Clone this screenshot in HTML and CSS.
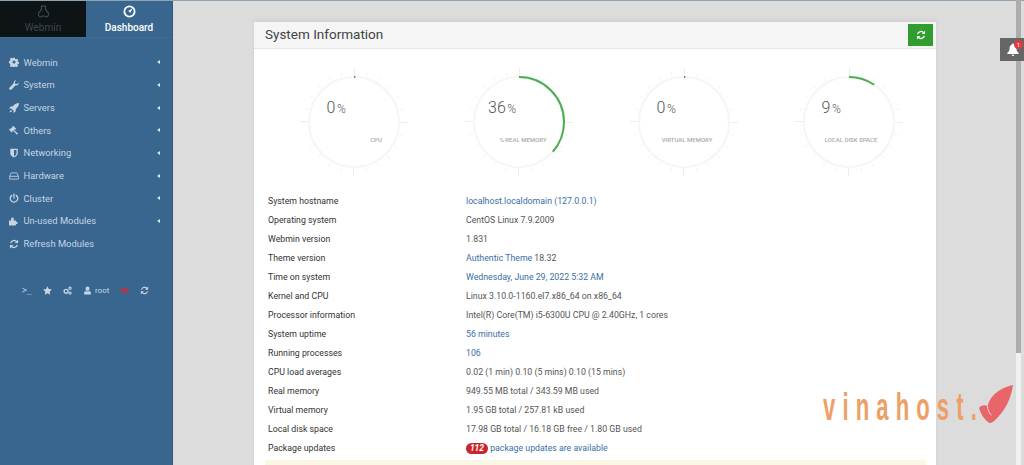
FILE: index.html
```html
<!DOCTYPE html>
<html lang="en">
<head>
<meta charset="utf-8">
<title>System Information</title>
<link rel="stylesheet" href="styles.css">
</head>
<body>
<svg class="sprite" width="0" height="0" aria-hidden="true">
  <defs>
    <symbol id="i-gear" viewBox="0 0 16 16"><path fill="currentColor" fill-rule="evenodd" d="M6.600 1h2.800l.4 2 1.200.6 1.800-1 1.900 2-1 1.700.5 1.300 1.800.5v2.700l-1.900.5-.5 1.200 1 1.800-2 1.900-1.700-1-1.200.5-.5 1.800H6.600l-.5-1.900-1.200-.5-1.700 1-2-1.900 1-1.700-.5-1.300L0 9.300V6.600l1.800-.5.500-1.300-1-1.700 2-2 1.700 1 1.200-.5zM8 5.500a2.500 2.500 0 1 0 0 5 2.500 2.500 0 0 0 0-5z"/></symbol>
    <symbol id="i-wrench" viewBox="0 0 16 16"><path fill="currentColor" d="M15.500 4.200c.3 2.600-2.200 5-4.800 4.300L4.100 15.100c-.9.900-2.300.9-3.200 0s-.9-2.300 0-3.200l6.600-6.600C6.800 2.700 9.200.2 11.800.5L9.300 3l.5 2.900 2.900.5z"/></symbol>
    <symbol id="i-rocket" viewBox="0 0 16 16"><path fill="currentColor" d="M16 0c-4.500.2-7.400 2-9.500 5L2.500 5.500 0 9l3.500-.3L7.300 12.500 7 16l3.500-2.500.5-4C14 7.400 15.800 4.500 16 0zM2.800 10.800.9 15.100l4.300-1.900z"/></symbol>
    <symbol id="i-gavel" viewBox="0 0 16 16"><path fill="currentColor" d="M6.500 1 11.500 6 10 7.500l-.8-.8L7.800 8.100l6.700 5.400-1.600 1.900-6.500-6.700-1.200 1.200.8.800L4 12 0 7.200l1.500-1.500.8.800L6 2.800l-.8-.6z"/></symbol>
    <symbol id="i-shield" viewBox="0 0 16 16"><path fill="currentColor" d="M2 1h12v7.500c0 3.500-3.500 5.700-6 6.800-2.500-1.100-6-3.300-6-6.800zm6 2v10.300c1.900-1 4-2.600 4-4.800V3z"/></symbol>
    <symbol id="i-hdd" viewBox="0 0 16 16"><path fill="none" stroke="currentColor" stroke-width="1.300" d="M1 8.500 3.500 3h9L15 8.500V13H1zM1 8.500h14"/></symbol>
    <symbol id="i-power" viewBox="0 0 16 16"><path fill="none" stroke="currentColor" stroke-width="2" stroke-linecap="round" d="M4.500 3.800a6 6 0 1 0 7 0M8 1.500V8"/></symbol>
    <symbol id="i-puzzle" viewBox="0 0 16 16"><path fill="currentColor" d="M0 7h3.500V5.200C3 4 3.800 2.500 5.500 2.500S8 4 7.500 5.200V7H11V9.500c1.200-.5 2.800.2 2.800 1.700s-1.600 2.200-2.800 1.700V15H0z"/></symbol>
    <symbol id="i-refresh" viewBox="0 0 16 16"><path fill="none" stroke="currentColor" stroke-width="2" d="M2.500 6.500A5.800 5.800 0 0 1 12.500 4.500M13.500 9.500A5.800 5.800 0 0 1 3.500 11.500"/><path fill="currentColor" d="M14.500 1v5.500H9zM1.500 15V9.500H7z"/></symbol>
    <symbol id="i-star" viewBox="0 0 16 16"><path fill="currentColor" d="m8 .5 2.400 5 5.400.7-4 3.800 1 5.500L8 12.800l-4.800 2.700 1-5.500-4-3.800 5.400-.7z"/></symbol>
    <symbol id="i-cogs" viewBox="0 0 16 16"><circle cx="5.500" cy="9.500" r="3.500" fill="none" stroke="currentColor" stroke-width="2.600"/><circle cx="12.500" cy="4" r="2" fill="none" stroke="currentColor" stroke-width="1.800"/><circle cx="12.500" cy="12.500" r="2" fill="none" stroke="currentColor" stroke-width="1.800"/></symbol>
    <symbol id="i-user" viewBox="0 0 16 16"><path fill="currentColor" d="M8 1a3.500 3.500 0 0 1 3.500 3.800c0 1.800-1 3.700-3.500 3.700S4.500 6.600 4.500 4.800A3.500 3.500 0 0 1 8 1zM2 15v-2.500C2 10 3.500 9 5 8.800c1.800 1.200 4.200 1.200 6 0 1.500.2 3 1.200 3 3.700V15z"/></symbol>
    <symbol id="i-bolt" viewBox="0 0 16 16"><path fill="currentColor" d="M1 4.500h14v7H1z"/></symbol>
    <g id="g-ticks">
      <circle cx="60" cy="60" r="49" pathLength="24" class="g-minor"/>
      <circle cx="60" cy="60" r="50" pathLength="4" class="g-major"/>
      <circle cx="60" cy="60" r="45" class="g-track"/>
    </g>
  </defs>
</svg>

<aside class="sidebar">
  <div class="tabs">
    <div class="tab tab-dark">
      <svg class="tab-icon" viewBox="0 0 16 16"><path fill="none" stroke="currentColor" stroke-width="1.500" d="M5.500 1.500h5v4l3.500 4.500c1 2-.5 4.500-2.500 4.500-1 0-2-1-3.500-1s-2.500 1-3.500 1C2.500 14.500 1 12 2 10l3.500-4.500z"/></svg>
      <span>Webmin</span>
    </div>
    <div class="tab tab-active">
      <svg class="tab-icon" viewBox="0 0 16 16"><circle cx="8" cy="8" r="6.300" fill="none" stroke="currentColor" stroke-width="2.200"/><path fill="currentColor" d="M11.800 4 9.200 9.500l-2.800-2z"/></svg>
      <span>Dashboard</span>
    </div>
  </div>
  <nav class="menu">
    <div class="menu-row"><svg class="menu-icon"><use href="#i-gear"/></svg><span class="menu-label">Webmin</span><i class="caret"></i></div>
    <div class="menu-row"><svg class="menu-icon"><use href="#i-wrench"/></svg><span class="menu-label">System</span><i class="caret"></i></div>
    <div class="menu-row"><svg class="menu-icon"><use href="#i-rocket"/></svg><span class="menu-label">Servers</span><i class="caret"></i></div>
    <div class="menu-row"><svg class="menu-icon"><use href="#i-gavel"/></svg><span class="menu-label">Others</span><i class="caret"></i></div>
    <div class="menu-row"><svg class="menu-icon"><use href="#i-shield"/></svg><span class="menu-label">Networking</span><i class="caret"></i></div>
    <div class="menu-row"><svg class="menu-icon"><use href="#i-hdd"/></svg><span class="menu-label">Hardware</span><i class="caret"></i></div>
    <div class="menu-row"><svg class="menu-icon"><use href="#i-power"/></svg><span class="menu-label">Cluster</span><i class="caret"></i></div>
    <div class="menu-row"><svg class="menu-icon"><use href="#i-puzzle"/></svg><span class="menu-label">Un-used Modules</span><i class="caret"></i></div>
    <div class="menu-row"><svg class="menu-icon"><use href="#i-refresh"/></svg><span class="menu-label">Refresh Modules</span></div>
  </nav>
  <div class="toolbar">
    <span class="tool-prompt">&gt;_</span>
    <svg class="tool-icon"><use href="#i-star"/></svg>
    <svg class="tool-icon"><use href="#i-cogs"/></svg>
    <span class="tool-user"><svg class="tool-icon"><use href="#i-user"/></svg>root</span>
    <svg class="tool-icon tool-red"><use href="#i-bolt"/></svg>
    <svg class="tool-icon"><use href="#i-refresh"/></svg>
  </div>
</aside>

<main class="main">
  <section class="panel">
    <header class="panel-head">
      <h1 class="panel-title">System Information</h1>
      <button class="refresh-btn" type="button" aria-label="Refresh"><svg class="refresh-icon"><use href="#i-refresh"/></svg></button>
    </header>
    <div class="gauges">
      <svg class="gauge" viewBox="0 0 120 120"><use href="#g-ticks"/><circle cx="60" cy="60" r="45" pathLength="100" class="g-arc" stroke-dasharray="0.5 100"/><text x="32.500" y="51" class="g-num">0<tspan class="g-pct" dx="1.500">%</tspan></text><text x="82" y="79.500" class="g-label" text-anchor="middle">CPU</text></svg>
      <svg class="gauge" viewBox="0 0 120 120"><use href="#g-ticks"/><circle cx="60" cy="60" r="45" pathLength="100" class="g-arc" stroke-dasharray="36.500 100"/><text x="29" y="51" class="g-num">36<tspan class="g-pct" dx="1.500">%</tspan></text><text x="64" y="79.500" class="g-label" text-anchor="middle">% REAL MEMORY</text></svg>
      <svg class="gauge" viewBox="0 0 120 120"><use href="#g-ticks"/><circle cx="60" cy="60" r="45" pathLength="100" class="g-arc" stroke-dasharray="0.500 100"/><text x="32.500" y="51" class="g-num">0<tspan class="g-pct" dx="1.500">%</tspan></text><text x="63" y="79.500" class="g-label" text-anchor="middle">VIRTUAL MEMORY</text></svg>
      <svg class="gauge" viewBox="0 0 120 120"><use href="#g-ticks"/><circle cx="60" cy="60" r="45" pathLength="100" class="g-arc" stroke-dasharray="9.500 100"/><text x="32.500" y="51" class="g-num">9<tspan class="g-pct" dx="1.500">%</tspan></text><text x="62" y="79.500" class="g-label" text-anchor="middle">LOCAL DISK SPACE</text></svg>
    </div>
    <div class="info">
      <div class="info-row"><span class="info-key">System hostname</span><span class="info-val"><a class="link">localhost.localdomain (127.0.0.1)</a></span></div>
      <div class="info-row"><span class="info-key">Operating system</span><span class="info-val">CentOS Linux 7.9.2009</span></div>
      <div class="info-row"><span class="info-key">Webmin version</span><span class="info-val">1.831</span></div>
      <div class="info-row"><span class="info-key">Theme version</span><span class="info-val"><a class="link">Authentic Theme</a> 18.32</span></div>
      <div class="info-row"><span class="info-key">Time on system</span><span class="info-val"><a class="link">Wednesday, June 29, 2022 5:32 AM</a></span></div>
      <div class="info-row"><span class="info-key">Kernel and CPU</span><span class="info-val">Linux 3.10.0-1160.el7.x86_64 on x86_64</span></div>
      <div class="info-row"><span class="info-key">Processor information</span><span class="info-val">Intel(R) Core(TM) i5-6300U CPU @ 2.40GHz, 1 cores</span></div>
      <div class="info-row"><span class="info-key">System uptime</span><span class="info-val"><a class="link">56 minutes</a></span></div>
      <div class="info-row"><span class="info-key">Running processes</span><span class="info-val"><a class="link">106</a></span></div>
      <div class="info-row"><span class="info-key">CPU load averages</span><span class="info-val">0.02 (1 min) 0.10 (5 mins) 0.10 (15 mins)</span></div>
      <div class="info-row"><span class="info-key">Real memory</span><span class="info-val">949.55 MB total / 343.59 MB used</span></div>
      <div class="info-row"><span class="info-key">Virtual memory</span><span class="info-val">1.95 GB total / 257.81 kB used</span></div>
      <div class="info-row"><span class="info-key">Local disk space</span><span class="info-val">17.98 GB total / 16.18 GB free / 1.80 GB used</span></div>
      <div class="info-row"><span class="info-key">Package updates</span><span class="info-val"><b class="badge">112</b> <a class="link">package updates are available</a></span></div>
    </div>
    <div class="alert"></div>
  </section>
</main>

<div class="scrollbar"><div class="scroll-thumb"></div></div>

<div class="notify">
  <svg class="bell" viewBox="0 0 16 16"><path fill="currentColor" d="M8 1c.8 0 1.200.6 1.200 1.200C11.500 3 12 5 12 7.500c0 2 1 3 2.500 4.500v1h-13v-1C3 10.500 4 9.500 4 7.500 4 5 4.500 3 6.800 2.200 6.800 1.600 7.200 1 8 1zM6.500 14h3c0 1-.7 1.500-1.500 1.500S6.500 15 6.500 14z"/></svg>
  <span class="notify-count">1</span>
</div>

<div class="watermark">
  <span class="wm-text">vinahost.</span>
  <svg class="wm-mark" viewBox="0 0 36 40"><path fill="#e8656a" d="M36 0C26 2 13 8 9 22 6 21 3 21 0 24 2 31 6 37 11 40 15 40 17 37 20 34 28 26 34 14 36 0z"/><path fill="none" stroke="#f6d6d6" stroke-width="1" d="M9 22c0 4 2 8 4 10"/></svg>
</div>
</body>
</html>
```

FILE: styles.css
```css
* { box-sizing: border-box; }
html, body { margin: 0; height: 465px; overflow: hidden; }
body {
  display: flex;
  background: #dcdcdc;
  border-top: 1px solid #8fa3b0;
  font-family: Roboto, "Liberation Sans", sans-serif;
  color: #444;
}
.sprite { position: absolute; }

.sidebar {
  flex: 0 0 173px;
  height: 465px;
  background: #38668e;
  border-right: 1px solid #2f5a80;
  color: #c6d5e4;
}
.tabs { display: flex; height: 37px; border-bottom: 1px solid #3f6d95; }
.tab {
  flex: 1;
  display: flex;
  flex-direction: column;
  align-items: center;
  padding-top: 4px;
  gap: 3px;
  font-size: 10px;
  line-height: 13px;
}
.tab-dark { background: #0e1316; color: #3c4650; }
.tab-active { color: #fff; font-weight: 500; }
.tab-icon { width: 13px; height: 13px; display: block; }

.menu { padding-top: 13px; }
.menu-row {
  display: flex;
  align-items: center;
  height: 22.670px;
  padding-left: 9px;
  padding-right: 12px;
  font-size: 9.400px;
}
.menu-icon { width: 10px; height: 10px; margin-right: 4.500px; color: #c6d5e4; }
.menu-label { flex: 1; }
.caret {
  border-style: solid;
  border-width: 2.500px 3px 2.500px 0;
  border-color: transparent #dbe5ee transparent transparent;
}

.toolbar {
  display: flex;
  align-items: center;
  height: 14px;
  margin-top: 29px;
  padding-left: 22px;
  gap: 11px;
  font-size: 8px;
}
.tool-prompt { font-size: 8px; font-family: "DejaVu Sans Mono", monospace; width: 10px; }
.tool-icon { width: 9px; height: 9px; }
.tool-user { display: flex; align-items: center; gap: 3px; }
.tool-red { color: #b0364f; }

.main { flex: 1; padding: 21px 88px 0 81px; min-width: 0; }
.panel {
  background: #fff;
  height: 500px;
  box-shadow: 0 -2px 4px rgba(0, 0, 0, .06);
}
.panel-head {
  display: flex;
  align-items: center;
  justify-content: space-between;
  height: 27px;
  padding: 0 3px 0 11px;
  background: #f5f5f5;
  border-bottom: 1px solid #e6e6e6;
}
.panel-title { margin: 0 0 2px; font-size: 13.500px; font-weight: 400; color: #444; }
.refresh-btn {
  display: flex;
  align-items: center;
  justify-content: center;
  width: 25px;
  height: 22px;
  padding: 0;
  border: 0;
  background: #2f9e2f;
  color: #fff;
}
.refresh-icon { width: 10px; height: 10px; }

.gauges { display: flex; padding: 13px 0 0 17.500px; height: 143px; }
.gauge { width: 120px; height: 120px; margin: 0 22.500px; overflow: visible; flex: none; }
.g-minor { fill: none; stroke: #eeeeee; stroke-width: 4; stroke-dasharray: .05 .95; }
.g-major { fill: none; stroke: #ececec; stroke-width: 8; stroke-dasharray: .012 .988; }
.g-track { fill: none; stroke: #f6f6f6; stroke-width: 2; }
.g-arc { fill: none; stroke: #4cae50; stroke-width: 2; transform: rotate(-90deg); transform-origin: 60px 60px; }
.g-num { font-size: 16px; font-weight: 300; fill: #555; }
.g-pct { font-size: 12px; }
.g-label { font-size: 6px; font-weight: 500; fill: #aaa; }

.info { padding: 0 14px; font-size: 8.750px; line-height: 19px; }
.info-row { display: flex; height: 19px; }
.info-key { flex: 0 0 198px; color: #333; }
.info-val { color: #555; }
.link { color: #3a6ea5; }
.badge {
  display: inline-block;
  min-width: 22px;
  height: 11px;
  line-height: 11px;
  padding: 0 3px;
  border-radius: 6px;
  background: #c9252b;
  color: #fff;
  font-style: italic;
  font-size: 8.500px;
  text-align: center;
}
.alert { height: 30px; margin: 2px 10px 0 11px; background: #fcf6e4; }

.scrollbar { position: absolute; top: 0; left: 1016px; width: 5px; height: 465px; background: #f1f1f1; }
.scroll-thumb { width: 5px; height: 353px; background: #adadad; }

.notify {
  position: absolute;
  top: 38px;
  left: 1000px;
  width: 24px;
  height: 23px;
  background: #666;
  color: #fff;
}
.bell { position: absolute; left: 6px; top: 4px; width: 14px; height: 15px; }
.notify-count {
  position: absolute;
  right: 1px;
  top: 2px;
  width: 9px;
  height: 9px;
  border-radius: 50%;
  background: #e03a3e;
  font-size: 6px;
  line-height: 9px;
  text-align: center;
}

.watermark { position: absolute; left: 823px; top: 385px; display: flex; align-items: flex-start; }
.wm-text {
  font-family: "Liberation Sans", sans-serif;
  font-size: 38px;
  font-weight: 700;
  line-height: 44px;
  letter-spacing: 12.300px;
  color: #ee9f66;
  transform: scaleX(.58);
  transform-origin: left top;
  width: 156px;
  white-space: nowrap;
}
.wm-mark { width: 34px; height: 38px; }
```
